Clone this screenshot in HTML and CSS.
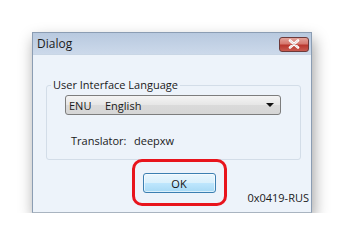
FILE: index.html
```html
<!DOCTYPE html>
<html>
<head>
<meta charset="utf-8">
<link rel="stylesheet" href="styles.css">
</head>
<body>
<div class="window">
  <div class="titlebar">
    <span class="title">Dialog</span>
    <span class="close">
      <svg width="14" height="10" viewBox="0 0 14 10"><path d="M3 1.5 L11 8.5 M11 1.5 L3 8.5" stroke="#fff" stroke-width="2.6" stroke-linecap="round"/><path d="M3 1.5 L11 8.5 M11 1.5 L3 8.5" stroke="#6b2a2a" stroke-width="0.6" opacity="0.35"/></svg>
    </span>
  </div>
  <div class="client">
    <fieldset class="group">
      <legend>User Interface Language</legend>
      <div class="combo">
        <span class="code">ENU</span>
        <span class="lang">English</span>
        <span class="arrow"></span>
      </div>
      <div class="translator">
        <span class="tlabel">Translator:</span>
        <span class="tname">deepxw</span>
      </div>
    </fieldset>
    <div class="footer">
      <span></span>
      <div class="okwrap">
        <button class="ok">OK</button>
        <span class="ring"></span>
      </div>
      <span class="locale">0x0419-RUS</span>
    </div>
  </div>
</div>
</body>
</html>
```
FILE: styles.css
```css
html, body { margin: 0; padding: 0; background: #fff; }
body {
  font-family: "Open Sans", "Noto Sans", sans-serif;
  font-size: 11px;
  color: #1a1a1a;
  padding: 32px 0 0 32px;
}
.window {
  width: 280px;
  height: 181px;
  box-sizing: border-box;
  border: 1px solid #8b9db3;
  border-bottom-color: #a9b4c0;
  background: #eaf1f9;
  box-shadow: 2px 7px 14px rgba(0,0,0,0.38);
  display: flex;
  flex-direction: column;
}
.titlebar {
  height: 21px;
  background: linear-gradient(#b8c9df, #ccd9ea);
  display: flex;
  align-items: center;
  justify-content: space-between;
  padding: 0 2px 0 4px;
  border-bottom: 1px solid #c9d6e5;
}
.title { font-size: 12px; color: #1b1b1b; }
.close {
  width: 30px;
  height: 15px;
  box-sizing: border-box;
  border: 1px solid #6d3a3a;
  border-radius: 3px;
  background: linear-gradient(#e3a39a 0%, #d6786e 45%, #b9372e 55%, #c85a4f 100%);
  display: flex;
  align-items: center;
  justify-content: center;
  margin-top: 1px;
}
.client {
  flex: 1;
  background: #edf3fa;
  padding: 0 10px 0 13px;
  display: flex;
  flex-direction: column;
}
.group {
  margin: 24px 0 0 0;
  padding: 0;
  border: 1px solid #d3dde8;
  border-radius: 3px;
  height: 81px;
  box-sizing: border-box;
}
.group legend {
  margin-left: 4px;
  padding: 0 2px;
  font-size: 11px;
  line-height: 12px;
  color: #1a1a1a;
}
.combo {
  margin: 4px 19px 0 18px;
  height: 20px;
  box-sizing: border-box;
  border: 1px solid #7d7d7d;
  border-radius: 3px;
  background: linear-gradient(#f4f4f4, #e6e6e6 50%, #dadada 51%, #d6d6d6);
  display: flex;
  align-items: center;
  padding: 0 6px 0 3px;
}
.code { width: 36px; font-size: 11px; }
.lang { flex: 1; font-size: 11px; }
.arrow {
  width: 0; height: 0;
  border-left: 4px solid transparent;
  border-right: 4px solid transparent;
  border-top: 4px solid #111;
}
.translator {
  margin: 18px 0 0 24px;
  display: flex;
  font-size: 11px;
}
.tlabel { width: 63px; }
.footer {
  display: grid;
  grid-template-columns: 1fr auto 1fr;
  margin-top: 13px;
  margin-right: -8px;
}
.okwrap { position: relative; margin-left: 3px; }
.ok {
  display: block;
  width: 73px;
  height: 20px;
  box-sizing: border-box;
  border: 1px solid #3c7fb1;
  border-radius: 3px;
  background: linear-gradient(#eaf6fd, #d9f0fc 50%, #bee6fd 51%, #a7d9f5);
  font-family: inherit;
  font-size: 11px;
  color: #111;
  padding: 0;
  box-shadow: inset 0 0 0 1px rgba(255,255,255,0.6);
}
.ring {
  position: absolute;
  left: -11px;
  top: -14px;
  width: 95px;
  height: 47px;
  box-sizing: border-box;
  border: 3px solid #e8141c;
  border-radius: 10px;
}
.locale {
  align-self: end;
  justify-self: end;
  font-size: 11px;
  line-height: 14px;
  margin-bottom: -12px;
}
```
